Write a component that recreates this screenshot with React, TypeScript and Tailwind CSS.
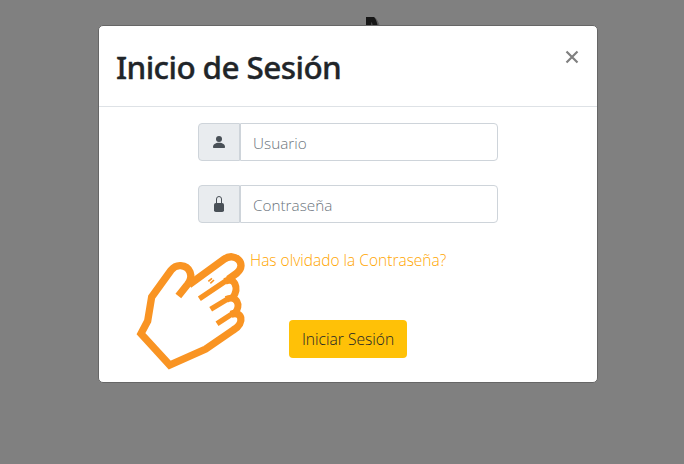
import React from "react";

function PersonIcon() {
  return (
    <svg width="14" height="14" viewBox="0 0 14 14" fill="#495057">
      <circle cx="7" cy="4" r="3" />
      <path d="M1 12c0-2.600 2.300-4.200 6-4.200s6 1.600 6 4.200c0 .7-.3 1-1 1H2c-.7 0-1-.3-1-1Z" />
    </svg>
  );
}

function LockIcon() {
  return (
    <svg width="16" height="18" viewBox="0 0 16 18">
      <rect x="3" y="8" width="10" height="9" rx="1.8" fill="#495057" />
      <path d="M5.500 8.500V4a2.500 2.500 0 0 1 5 0v4.500" fill="none" stroke="#495057" strokeWidth="1" />
    </svg>
  );
}

function PointingHand() {
  return (
    <svg className="shrink-0" width="110" height="118" viewBox="33 39 330 354" fill="none" stroke="#f99423" strokeLinejoin="miter">
      <path d="M160 168L188 133C207 108 195 79 167 77C154 76 146 81 138 91L80 171L68 243L48 281L134 375L242 327L325 270C362 248 350 211 318 223" strokeWidth="22" />
      <path d="M192 134L297 58C329 34 368 72 336 99L310 118" strokeWidth="22" />
      <path d="M300 124C327 110 345 142 323 174" strokeWidth="21" />
      <path d="M304 178C333 164 352 195 328 222" strokeWidth="21" />
      <path d="M223 176L310 118M257 208L308 177M276 251L322 221" strokeWidth="16" />
      <path d="M250 124l11-9M256 130l11-10" strokeWidth="5" />
    </svg>
  );
}

function Field({ icon, label, type }: { icon: React.ReactNode; label: string; type: string }) {
  return (
    <div className="flex h-[38px] w-[300px]">
      <span className="flex w-[42px] items-center justify-center rounded-l border border-[#ced4da] bg-[#e9ecef]">{icon}</span>
      <input type={type} placeholder={label} className="min-w-0 flex-1 rounded-r border border-[#ced4da] bg-white px-3 pt-[2px] text-[15.300px] font-light text-[#495057] outline-none placeholder:text-[#6c757d]" />
    </div>
  );
}

export default function App() {
  return (
    <div className="relative h-[464px] w-[684px] overflow-hidden bg-[#808080] pl-[98px] pt-[25px] font-['Open_Sans',sans-serif] text-[#212529]">
      <svg className="absolute left-[365px] top-4" width="18" height="12" viewBox="0 0 18 12">
        <path d="M2 1h7q5 3 6 11H2Z" fill="#606060" />
        <path d="M1 1h8q3 3 4 11H1Z" fill="#171717" />
        <path d="M6 6q2 1 2 6H6Z" fill="#444" />
      </svg>
      <section className="relative h-[358px] w-[500px] rounded-[5px] border border-[#666] bg-white">
        <header className="flex h-[81px] items-start justify-between border-b border-[#dee2e6] pl-[17px] pr-[18px]">
          <h1 className="pt-[17px] font-['Noto_Sans',sans-serif] text-[31.500px] font-medium leading-[48px] tracking-[-0.6px] [-webkit-text-stroke:0.35px_#212529]">Inicio de Sesión</h1>
          <button className="mt-[24px]" aria-label="Cerrar">
            <svg width="14" height="14" viewBox="0 0 14 14" stroke="#808080" strokeWidth="2.200">
              <path d="M1.500 1.500l11 11M12.500 1.500l-11 11" />
            </svg>
          </button>
        </header>
        <div className="flex flex-col gap-6 pl-[99px] pt-4">
          <Field icon={<PersonIcon />} label="Usuario" type="text" />
          <Field icon={<LockIcon />} label="Contraseña" type="password" />
        </div>
        <div className="flex pl-[37px] pt-[30px]">
          <PointingHand />
          <div className="flex flex-col items-start pl-1">
            <a className="mt-[-5px] whitespace-nowrap text-[15.500px] font-light leading-6 text-[#ffa500]">Has olvidado la Contraseña?</a>
            <button className="ml-[39px] mt-[48px] h-[38px] w-[118px] whitespace-nowrap rounded bg-[#ffc107] pt-[2px] text-[15.600px] font-light">Iniciar Sesión</button>
          </div>
        </div>
      </section>
    </div>
  );
}
